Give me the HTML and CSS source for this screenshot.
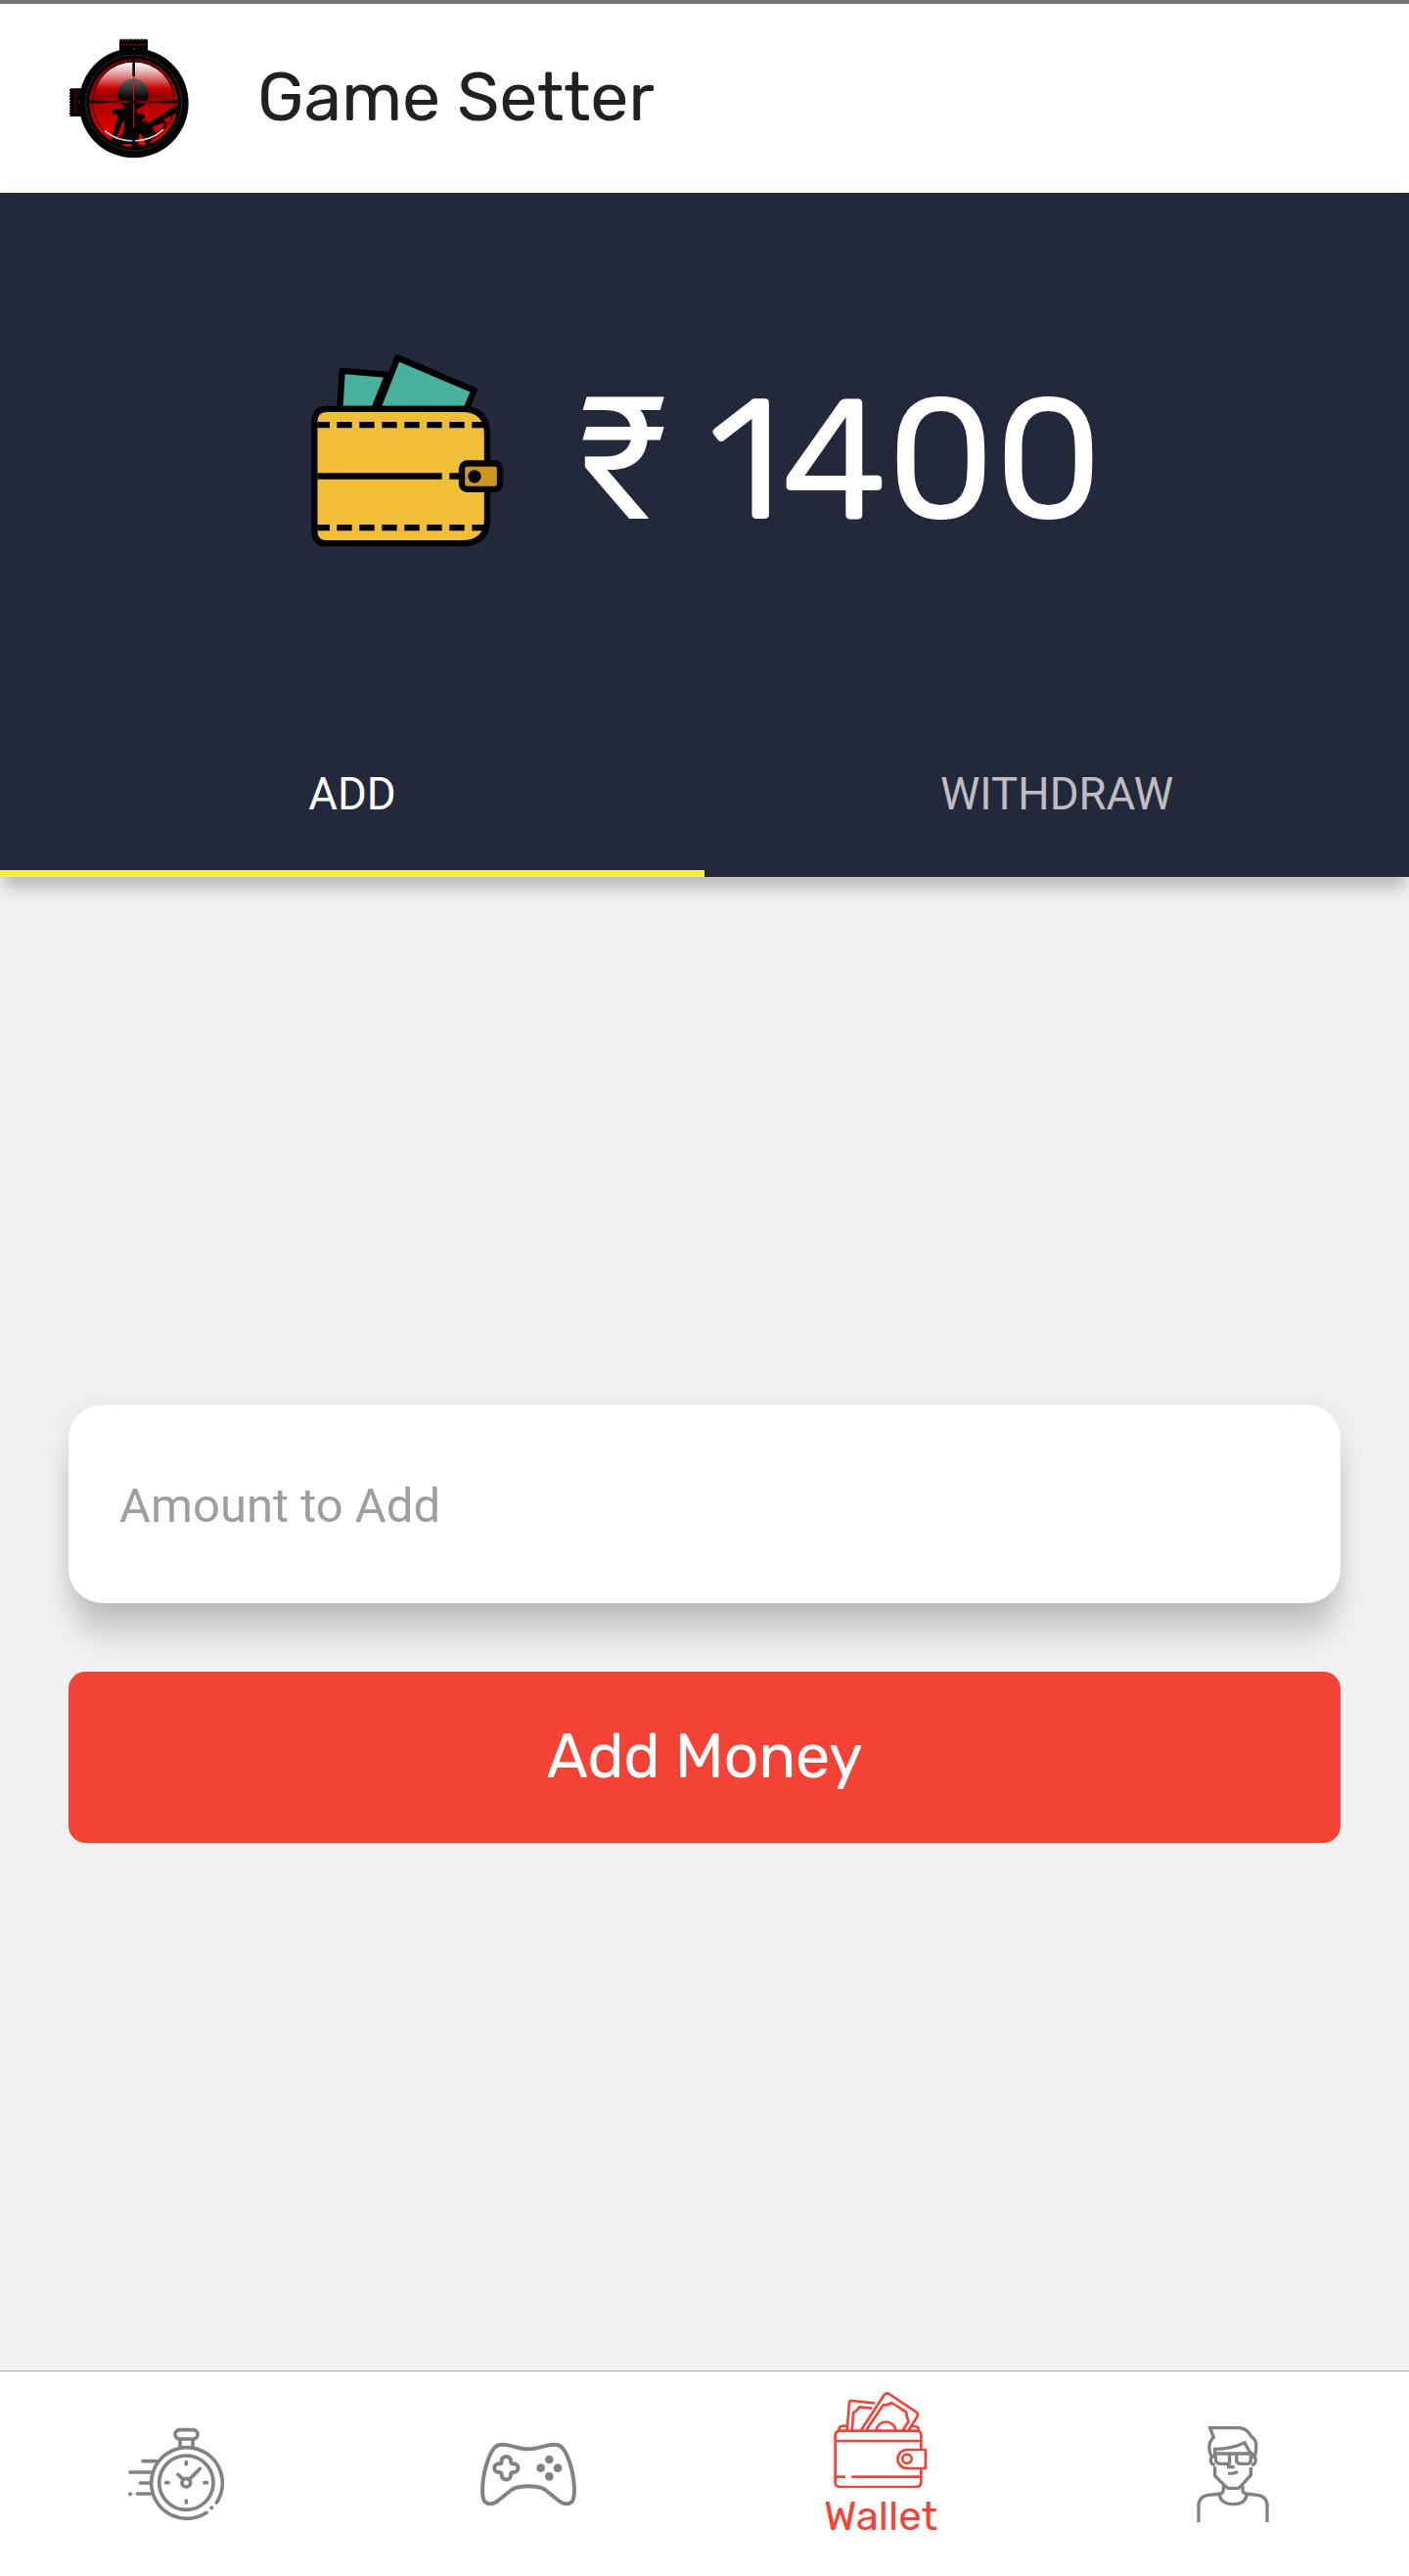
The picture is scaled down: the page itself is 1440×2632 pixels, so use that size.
FILE: index.html
```
<!DOCTYPE html>
<html lang="en">
<head>
<meta charset="utf-8">
<title>Game Setter</title>
<link rel="stylesheet" href="styles.css">
</head>
<body>
<div class="app">
  <div class="status-strip"></div>
  <header class="header">
    <svg class="logo" viewBox="60 59 369 369" aria-hidden="true">
      <defs>
        <linearGradient id="lens" x1="0" y1="0" x2="0" y2="1">
          <stop offset="0" stop-color="#fff"/>
          <stop offset=".13" stop-color="#e8b0b0"/>
          <stop offset=".33" stop-color="#c80000"/>
          <stop offset=".42" stop-color="#930000"/>
          <stop offset=".55" stop-color="#b80000"/>
          <stop offset="1" stop-color="#f00000"/>
        </linearGradient>
        <linearGradient id="rim" x1="0" y1="0" x2="0" y2="1">
          <stop offset="0" stop-color="#6d0000"/>
          <stop offset=".6" stop-color="#c80000"/>
          <stop offset="1" stop-color="#f00"/>
        </linearGradient>
        <linearGradient id="head" x1="0" y1="0" x2="0" y2="1">
          <stop offset="0" stop-color="#666"/>
          <stop offset=".6" stop-color="#0a0a0a"/>
          <stop offset="1" stop-color="#000"/>
        </linearGradient>
        <clipPath id="lens-clip"><circle cx="260" cy="257" r="135"/></clipPath>
      </defs>
      <rect x="216" y="64" width="87" height="40" rx="3"/>
      <rect x="66" y="213" width="40" height="86" rx="3"/>
      <path d="M218 64h84" stroke="#000" stroke-width="6" stroke-dasharray="6 3"/>
      <path d="M66 216v82" stroke="#000" stroke-width="6" stroke-dasharray="6 3"/>
      <path d="M221 79h77M81 218v76" stroke="#8c0000" stroke-width="3"/>
      <circle cx="260" cy="258" r="168"/>
      <circle cx="260" cy="257" r="147" fill="none" stroke="#444" stroke-width="2"/>
      <circle cx="260" cy="92" r="3" fill="#444"/>
      <circle cx="92" cy="255" r="3" fill="#444"/>
      <circle cx="260" cy="257" r="135" fill="url(#rim)"/>
      <circle cx="260" cy="257" r="126" fill="url(#lens)" stroke="#100" stroke-width="3"/>
      <g clip-path="url(#lens-clip)">
        <circle cx="259" cy="230" r="47" fill="url(#head)"/>
        <path d="M238 264H280L266 287 292 294 303 320 398 262V286L350 309 361 318 356 335 330 350 310 377 325 400H183L213 292H196V277H223L230 268Z"/>
        <path d="M287 307l13-7 3 6-15 10M317 331l38-15-5 16-24 19ZM224 320l9-12-5 42-24 22Z" fill="#d00000"/>
        <path d="M278 350l10 12 10 24h-24ZM226 384h28v7h-28Z" fill="#f00"/>
      </g>
      <path d="M172 344Q207 374 260 374T350 340" fill="none" stroke="#ccc" stroke-width="5" stroke-linecap="round"/>
      <path d="M260 122v54M127 254h50M345 254h50M260 336v58" stroke="#000" stroke-width="8"/>
      <path d="M127 254h270" stroke="#000" stroke-width="3"/>
      <path d="M260 177v157M214 254h34M270 254h35" stroke="#f00" stroke-width="3"/>
      <circle cx="260" cy="254" r="4"/>
    </svg>
    <h1 class="title">Game Setter</h1>
  </header>

  <section class="balance">
    <div class="balance-row">
      <svg class="purse" viewBox="45 52.5 630 630" aria-hidden="true">
        <g stroke="#000" stroke-width="19" stroke-linejoin="round">
          <path d="M145 232L152 115 292 127 250 232Z" fill="#48b19f"/>
          <path d="M260 232L322 75 557 175 533 232Z" fill="#48b19f"/>
          <path d="M104 232H520Q597 232 597 310V570Q597 644 520 644H104Q67 644 67 605V272Q67 232 104 232Z" fill="#f0be37"/>
          <path d="M76 281H114M136 281H182M205 281H251M274 281H320M343 281H389M412 281H458M481 281H527M550 281H590M76 596H114M136 596H182M205 596H251M274 596H320M343 596H389M412 596H458M481 596H527M550 596H590M76 438H458M481 438H520" fill="none"/>
          <rect x="519" y="399" width="117" height="79" rx="16" fill="#cd971e"/>
        </g>
        <circle cx="558" cy="439" r="20"/>
      </svg>
      <p class="amount"><span class="rupee">₹</span>1400</p>
    </div>
    <nav class="tabs">
      <a class="tab tab-active">ADD</a>
      <a class="tab">WITHDRAW</a>
    </nav>
  </section>

  <main class="form">
    <input class="field" type="text" placeholder="Amount to Add">
    <button class="submit" type="button">Add Money</button>
  </main>

  <nav class="bottom-nav">
    <a class="nav-item">
      <svg class="nav-icon" viewBox="63 54 294 294" aria-hidden="true">
        <g fill="none" stroke="currentColor" stroke-width="11" stroke-linecap="round">
          <rect x="207" y="65" width="69" height="28" rx="14"/>
          <path d="M222 94V116M261 94V116"/>
          <path d="M303 319A109 109 0 1 1 334 288"/>
          <circle cx="241" cy="227" r="83"/>
          <circle cx="241" cy="227" r="13"/>
          <path d="M232 217L216 202M250 217L283 184M241 164V170M241 282V288M179 227H186M297 227H304M108 161H148M69 195H136M100 228H131M91 261H133"/>
        </g>
        <circle cx="69" cy="262" r="6" fill="currentColor"/>
        <circle cx="319" cy="304" r="6" fill="currentColor"/>
      </svg>
    </a>
    <a class="nav-item">
      <svg class="nav-icon" viewBox="63 24 294 294" aria-hidden="true">
        <path d="M122 81C150 77 175 94 210 94S268 77 298 81C322 84 336 128 345 166C351 196 356 248 340 258C314 274 289 237 259 217Q240 208 210 208T161 217C131 237 106 274 80 258C64 248 69 196 75 166C84 128 98 84 122 81Z" fill="none" stroke="currentColor" stroke-width="12"/>
        <path d="M128 131C128 112 156 112 156 131C156 136 159 139 164 139C183 139 183 165 164 165C159 165 156 168 156 173C156 192 128 192 128 173C128 168 125 165 120 165C101 165 101 139 120 139C125 139 128 136 128 131Z" fill="none" stroke="currentColor" stroke-width="12"/>
        <g fill="currentColor"><circle cx="274" cy="126" r="13"/><circle cx="248" cy="152" r="13"/><circle cx="300" cy="152" r="13"/><circle cx="274" cy="178" r="13"/></g>
      </svg>
    </a>
    <a class="nav-item nav-item-active">
      <svg class="nav-icon" viewBox="93 101 294 294" aria-hidden="true">
        <g fill="none" stroke="currentColor" stroke-width="8" stroke-linejoin="round">
          <path d="M364 278V234Q364 220 350 220H115Q101 220 101 236V376Q101 392 116 392H348Q364 392 364 376V335M101 251H364M101 361H132M151 361H364"/>
          <path d="M378 278H321A28 28 0 0 0 321 335H378Z"/>
          <circle cx="321" cy="306" r="14"/>
          <path d="M112 220Q112 205 125 205H135M357 220Q357 206 344 206H332"/>
          <path d="M137 218L144 134Q145 127 153 128L222 135M152 218L157 164Q169 158 175 147L213 151"/>
          <path d="M180 218L251 110Q258 102 266 107L350 163Q357 169 352 177L326 218"/>
          <path d="M196 218L248 141Q261 142 274 134L319 163Q319 177 326 191L308 218"/>
          <path d="M226 218A31 31 0 0 1 287 218"/>
        </g>
      </svg>
      <span class="nav-label">Wallet</span>
    </a>
    <a class="nav-item">
      <svg class="nav-icon" viewBox="33 54 294 294" aria-hidden="true">
        <g fill="none" stroke="currentColor" stroke-width="10">
          <path d="M75 348V298Q75 269 104 265L140 261Q151 259 151 248V236M285 348V298Q285 269 256 265L221 261Q210 259 210 248V236"/>
          <path d="M138 262Q143 293 181 293T223 262"/>
          <path d="M125 178V206L160 241Q164 244 170 244H193Q199 244 202 240L235 204V180"/>
          <path d="M113 144Q99 108 121 88L110 59H197Q222 59 237 86Q254 98 251 117Q252 130 247 146L231 132 216 104Q177 124 125 124V150"/>
          <path d="M123 138H240"/>
          <path d="M127 144V153Q127 169 142 169H163Q170 169 170 160V142M191 142V157Q191 169 204 169H225Q235 169 235 157V142"/>
          <path d="M125 144Q112 146 112 158T125 173M237 146Q250 146 250 158T237 173"/>
          <path d="M170 160L167 179H185M165 199Q185 199 195 193"/>
        </g>
      </svg>
    </a>
  </nav>
</div>
</body>
</html>
```
FILE: styles.css
```
* { box-sizing: border-box; }

body {
  margin: 0;
  background: #f1f1f1;
  font-family: Roboto, "Liberation Sans", sans-serif;
}

.app {
  display: flex;
  flex-direction: column;
  width: 1440px;
  height: 2632px;
}

.status-strip {
  height: 4px;
  background: #757575;
}

.header {
  display: flex;
  align-items: center;
  gap: 70px;
  height: 193px;
  padding: 0 70px;
  background: #fff;
}

.logo { width: 123px; height: 123px; }

.title {
  margin: 0 0 2px;
  color: #212121;
  font: 400 70px/84px Rubik, Inter, sans-serif;
  letter-spacing: -.2px;
}

.balance {
  display: flex;
  flex-direction: column;
  height: 699px;
  background: #24283b;
  box-shadow: 0 17px 14px -4px rgba(0, 0, 0, .18), 0 2px 14px rgba(0, 0, 0, .06);
}

.balance-row {
  display: flex;
  flex: 1;
  align-items: center;
  justify-content: center;
  gap: 68px;
}

.purse { width: 210px; height: 210px; }

.amount {
  display: flex;
  align-items: baseline;
  gap: 43px;
  margin: 0;
  padding-top: 16px;
  color: #fff;
  font: 400 175px/210px Rubik, Inter, sans-serif;
  letter-spacing: -1px;
}

.rupee { font-family: Roboto, sans-serif; }

.tabs {
  display: flex;
  height: 168px;
}

.tab {
  display: flex;
  flex: 1;
  align-items: center;
  justify-content: center;
  padding-top: 5px;
  border-bottom: 7px solid transparent;
  color: #bdbdc2;
  font-size: 45.5px;
}

.tab-active {
  border-color: #ffeb3b;
  color: #fff;
}

.form {
  display: flex;
  flex: 1;
  flex-direction: column;
  justify-content: center;
  gap: 70px;
  padding: 0 70px;
}

.field {
  height: 203px;
  padding: 4px 53px 0 52px;
  border: 0;
  border-radius: 35px;
  outline: 0;
  background: #fff;
  box-shadow: 0 37px 30px -5px rgba(0, 0, 0, .16), 0 5px 26px rgba(0, 0, 0, .1);
  font: 400 49px Roboto, sans-serif;
}

.field::placeholder { color: #9e9e9e; opacity: 1; }

.submit {
  position: relative;
  height: 175px;
  padding: 0 0 2px;
  border: 0;
  border-radius: 17.5px;
  background: #f44336;
  color: #fff;
  font: 400 63px/75px Rubik, Inter, sans-serif;
  letter-spacing: -.3px;
}

.bottom-nav {
  display: flex;
  height: 210px;
  border-top: 1px solid #b0b0b0;
  background: #fff;
}

.nav-item {
  display: flex;
  flex: 1;
  flex-direction: column;
  align-items: center;
  justify-content: center;
  color: #828282;
}

.nav-item-active {
  justify-content: flex-start;
  padding-top: 21px;
  color: #f44336;
}

.nav-icon { width: 98px; height: 98px; }

.nav-label {
  margin-top: 4px;
  font: 400 42px/50px Rubik, Inter, sans-serif;
}
```
